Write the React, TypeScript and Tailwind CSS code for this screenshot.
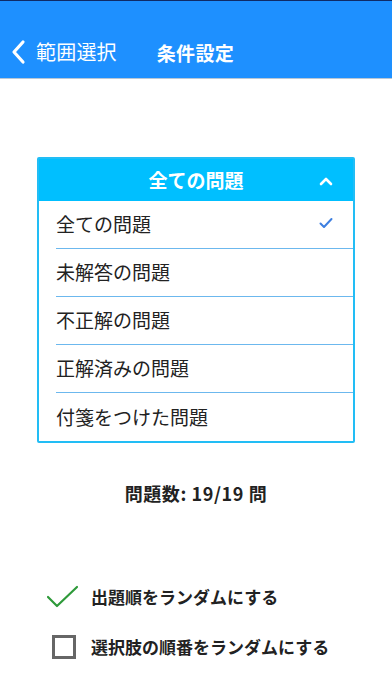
import { useState } from "react";

const FONT = { fontFamily: '"Noto Sans CJK JP", "Noto Sans", sans-serif' };

const options = ["全ての問題", "未解答の問題", "不正解の問題", "正解済みの問題", "付箋をつけた問題"];

export default function App() {
  const [selected, setSelected] = useState(0);
  const [shuffleOrder, setShuffleOrder] = useState(true);
  const [shuffleChoices, setShuffleChoices] = useState(false);

  return (
    <div className="w-[392px] h-[696px] bg-white overflow-hidden flex flex-col" style={FONT}>
      <header className="h-[79px] bg-[#1e90ff] border-t border-[#0f2a66] border-b border-b-[#b9c7d6] flex items-center pt-[25px]">
        <button className="flex items-center text-white pl-[11px]">
          <svg width="16" height="26" viewBox="0 0 16 26" className="mr-[9px]">
            <path d="M12 3 L3 13 L12 23" fill="none" stroke="white" strokeWidth="3.2" strokeLinecap="round" strokeLinejoin="round" />
          </svg>
          <span className="text-[20px] leading-none tracking-[0.2px]">範囲選択</span>
        </button>
        <h1 className="ml-[40px] text-white text-[19px] font-bold leading-none tracking-[0.3px]">条件設定</h1>
      </header>

      <div className="mt-[78px] mx-[37px] border-2 border-[#22bdf5] rounded-[2px] flex flex-col">
        <div className="h-[42px] bg-[#00bfff] flex items-center relative">
          <span className="flex-1 text-center text-white text-[19px] font-bold leading-none pb-[2px]">全ての問題</span>
          <svg width="14" height="10" viewBox="0 0 14 10" className="absolute right-[20px] top-[17px]">
            <path d="M2 8 L7 3 L12 8" fill="none" stroke="white" strokeWidth="2.6" strokeLinecap="round" strokeLinejoin="round" />
          </svg>
        </div>
        {options.map((label, i) => (
          <button
            key={label}
            onClick={() => setSelected(i)}
            className={`h-[48px] ml-[17px] flex items-center justify-between pr-[20px] text-left ${i < options.length - 1 ? "border-b border-[#6cb8ee]" : ""}`}
          >
            <span className="text-[19px] leading-none text-[#222] pb-[2px]">{label}</span>
            {selected === i && (
              <svg width="14" height="12" viewBox="0 0 14 12" className="mb-[4px]">
                <path d="M1.5 6.5 L5 10 L12.5 2" fill="none" stroke="#3d7fe0" strokeWidth="2" strokeLinecap="round" strokeLinejoin="round" />
              </svg>
            )}
          </button>
        ))}
      </div>

      <p className="mt-[41px] text-center text-[18px] font-bold leading-none text-[#222] tracking-[0.6px]">問題数: 19/19 問</p>

      <div className="mt-[80px] flex flex-col gap-[20px] pl-[46px]">
        <button onClick={() => setShuffleOrder(!shuffleOrder)} className="flex items-center h-[30px]">
          <span className="w-[33px] h-[24px] flex items-center justify-center">
            {shuffleOrder ? (
              <svg width="33" height="24" viewBox="0 0 33 24">
                <path d="M2 12 L11 21 L31 2" fill="none" stroke="#2e9a3a" strokeWidth="2.2" strokeLinecap="round" strokeLinejoin="round" />
              </svg>
            ) : (
              <span className="w-[23px] h-[23px] border-2 border-[#666]" />
            )}
          </span>
          <span className="ml-[12px] text-[17px] font-bold text-[#222]">出題順をランダムにする</span>
        </button>
        <button onClick={() => setShuffleChoices(!shuffleChoices)} className="flex items-center h-[30px]">
          <span className="w-[35px] h-[24px] flex items-center justify-center">
            {shuffleChoices ? (
              <svg width="33" height="24" viewBox="0 0 33 24">
                <path d="M2 12 L11 21 L31 2" fill="none" stroke="#2e9a3a" strokeWidth="2.2" strokeLinecap="round" strokeLinejoin="round" />
              </svg>
            ) : (
              <span className="w-[24px] h-[24px] border-[3px] border-[#666]" />
            )}
          </span>
          <span className="ml-[10px] text-[17px] font-bold text-[#222]">選択肢の順番をランダムにする</span>
        </button>
      </div>
    </div>
  );
}
